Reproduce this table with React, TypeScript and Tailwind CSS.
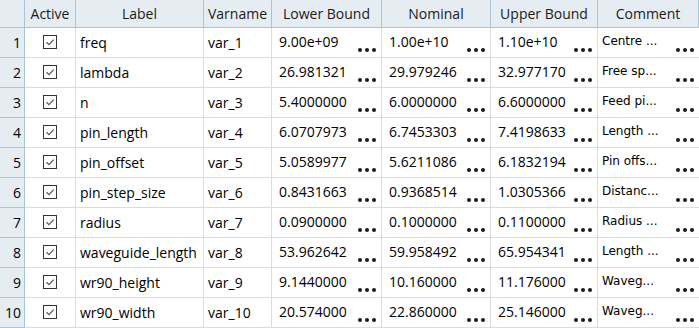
const rows = [
  ['freq', 'var_1', '9.00e+09', '1.00e+10', '1.10e+10', 'Centre ...'],
  ['lambda', 'var_2', '26.981321', '29.979246', '32.977170', 'Free sp...'],
  ['n', 'var_3', '5.4000000', '6.0000000', '6.6000000', 'Feed pi...'],
  ['pin_length', 'var_4', '6.0707973', '6.7453303', '7.4198633', 'Length ...'],
  ['pin_offset', 'var_5', '5.0589977', '5.6211086', '6.1832194', 'Pin offs...'],
  ['pin_step_size', 'var_6', '0.8431663', '0.9368514', '1.0305366', 'Distanc...'],
  ['radius', 'var_7', '0.0900000', '0.1000000', '0.1100000', 'Radius ...'],
  ['waveguide_length', 'var_8', '53.962642', '59.958492', '65.954341', 'Length ...'],
  ['wr90_height', 'var_9', '9.1440000', '10.160000', '11.176000', 'Waveg...'],
  ['wr90_width', 'var_10', '20.574000', '22.860000', '25.146000', 'Waveg...'],
];

const headers = ['', 'Active', 'Label', 'Varname', 'Lower Bound', 'Nominal', 'Upper Bound', 'Comment'];

function Dots() {
  return (
    <div className="absolute right-[5px] bottom-[5px] flex gap-[3px]">
      <span className="w-[4px] h-[4px] rounded-full bg-[#1a1a1a]" />
      <span className="w-[4px] h-[4px] rounded-full bg-[#1a1a1a]" />
      <span className="w-[4px] h-[4px] rounded-full bg-[#1a1a1a]" />
    </div>
  );
}

function Check() {
  return (
    <div className="w-[14px] h-[14px] border border-[#333] bg-white flex items-center justify-center">
      <svg width="10" height="10" viewBox="0 0 10 10">
        <path d="M1.5 5.2 L4 7.6 L8.7 2.6" fill="none" stroke="#555" strokeWidth="1.2" />
      </svg>
    </div>
  );
}

export default function App() {
  return (
    <div className="w-[699px] h-[328px] bg-white overflow-hidden text-[14px] text-black" style={{ fontFamily: '"Open Sans", sans-serif' }}>
      <div className="grid grid-cols-[25px_51px_128px_68px_110px_109px_107px_101px]">
        {headers.map((h, i) => (
          <div key={i} className="h-[28px] bg-[#e6edf2] border-r border-b border-[#a9c3d7] flex items-center justify-center text-[#1a1a1a]">
            {h}
          </div>
        ))}
        {rows.map((r, ri) => (
          <div key={ri} className="contents">
            <div className="h-[30px] bg-[#e6edf2] border-r border-b border-[#a9c3d7] flex items-center justify-end pr-[3px]">
              {ri + 1}
            </div>
            <div className="h-[30px] border-r border-b border-[#dcdcdc] flex items-center justify-center pb-[2px]">
              <Check />
            </div>
            <div className="h-[30px] border-r border-b border-[#dcdcdc] flex items-center pl-[4px] pb-[1px]">{r[0]}</div>
            <div className="h-[30px] border-r border-b border-[#dcdcdc] flex items-center pl-[4px] pb-[1px]">{r[1]}</div>
            {[r[2], r[3], r[4]].map((v, vi) => (
              <div key={vi} className="relative h-[30px] border-r border-b border-[#dcdcdc] flex items-center pl-[7px] pb-[3px]">
                {v}
                <Dots />
              </div>
            ))}
            <div className="relative h-[30px] border-b border-[#dcdcdc] flex items-center pl-[4px] pb-[3px] text-[12px]" style={{ fontFamily: 'Tahoma, "DejaVu Sans", sans-serif' }}>
              {r[5]}
              <Dots />
            </div>
          </div>
        ))}
      </div>
    </div>
  );
}
